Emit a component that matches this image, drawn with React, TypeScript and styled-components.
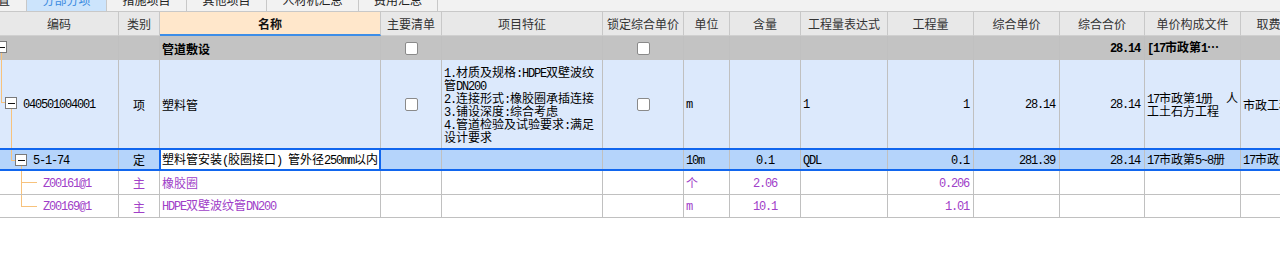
import React from "react";
import styled, { createGlobalStyle, css } from "styled-components";

const COLS = [119, 41, 221, 61, 161, 81, 46, 71, 87, 86, 86, 85, 96, 80];
const TEMPLATE = COLS.map((w) => `${w}px`).join(" ");

const GRID = "#c0c0c0";
const BLUE = "#1166ee";
const PURPLE = "#a040c8";
const TREE = "#f7c27c";

const HEADERS = [
  "编码",
  "类别",
  "名称",
  "主要清单",
  "项目特征",
  "锁定综合单价",
  "单位",
  "含量",
  "工程量表达式",
  "工程量",
  "综合单价",
  "综合合价",
  "单价构成文件",
  "取费专业",
];

const TABS = [
  { label: "费用设置", width: 81 },
  { label: "分部分项", width: 80, active: true },
  { label: "措施项目", width: 80 },
  { label: "其他项目", width: 80 },
  { label: "人材机汇总", width: 92 },
  { label: "费用汇总", width: 79 },
];

const FEATURES = [
  "1.材质及规格:HDPE双壁波纹",
  "管DN200",
  "2.连接形式:橡胶圈承插连接",
  "3.铺设深度:综合考虑",
  "4.管道检验及试验要求:满足",
  "设计要求",
];

// half-width runs use a mono face so digits get the 6px cell of the original grid font
const T = ({ children }: { children: string }) => (
  <span>
    {children
      .split(/([\x20-\x7e]+)/)
      .filter(Boolean)
      .map((part, i) =>
        /^[\x20-\x7e]+$/.test(part) ? (
          <Latin key={i}>{part}</Latin>
        ) : (
          <React.Fragment key={i}>{part}</React.Fragment>
        )
      )}
  </span>
);

type GuideKind = "group" | "bill" | "quota" | "item" | "lastItem";

const GUIDES: Record<GuideKind, { w: number; h: number; lines: string; box?: [number, number] }> = {
  group: { w: 10, h: 24, lines: "M1.5 17V24", box: [-4.5, 5.5] },
  bill: { w: 23, h: 88, lines: "M1.5 0V42.5H5 M11.5 49V88", box: [5.5, 37.5] },
  quota: { w: 33, h: 19, lines: "M11.5 0V10.5H15 M21.5 16V19", box: [15.5, 4.5] },
  item: { w: 43, h: 23, lines: "M21.5 0V23 M21.5 11.5H37" },
  lastItem: { w: 43, h: 22, lines: "M21.5 0V11.5H37" },
};

const TreeGuide = ({ kind }: { kind: GuideKind }) => {
  const g = GUIDES[kind];
  return (
    <Guide width={g.w} height={g.h} viewBox={`0 0 ${g.w} ${g.h}`} shapeRendering="crispEdges">
      <path d={g.lines} stroke={TREE} fill="none" />
      {g.box && (
        <>
          <rect x={g.box[0]} y={g.box[1]} width={11} height={11} fill="#fff" stroke="#7a7a7a" />
          <path d={`M${g.box[0] + 2.5} ${g.box[1] + 6}H${g.box[0] + 9.5}`} stroke="#111" />
        </>
      )}
    </Guide>
  );
};

export default function App() {
  return (
    <Page>
      <GlobalStyle />
      <TabBar>
        {TABS.map((t) => (
          <Tab key={t.label} $w={t.width} $active={t.active}>
            {t.label}
          </Tab>
        ))}
      </TabBar>

      <HeaderRow>
        {HEADERS.map((h) => (
          <HeadCell key={h} $main={h === "名称"}>
            {h}
          </HeadCell>
        ))}
      </HeaderRow>

      <Row $kind="group">
        <CodeCell>
          <TreeGuide kind="group" />
        </CodeCell>
        <Cell />
        <Cell $bold>管道敷设</Cell>
        <Cell $align="center">
          <Checkbox />
        </Cell>
        <Cell />
        <Cell $align="center">
          <Checkbox />
        </Cell>
        <Cell />
        <Cell />
        <Cell />
        <Cell />
        <Cell />
        <Cell $align="right" $bold>
          <T>28.14</T>
        </Cell>
        <Cell $bold>
          <T>[17市政第1…</T>
        </Cell>
        <Cell />
      </Row>

      <Row $kind="bill">
        <CodeCell>
          <TreeGuide kind="bill" />
          <T>040501004001</T>
        </CodeCell>
        <Cell $align="center">项</Cell>
        <Cell>塑料管</Cell>
        <Cell $align="center">
          <Checkbox />
        </Cell>
        <Cell>
          <Lines>
            {FEATURES.map((f) => (
              <Line key={f}>
                <T>{f}</T>
              </Line>
            ))}
          </Lines>
        </Cell>
        <Cell $align="center">
          <Checkbox />
        </Cell>
        <Cell>
          <T>m</T>
        </Cell>
        <Cell />
        <Cell>
          <T>1</T>
        </Cell>
        <Cell $align="right">
          <T>1</T>
        </Cell>
        <Cell $align="right">
          <T>28.14</T>
        </Cell>
        <Cell $align="right">
          <T>28.14</T>
        </Cell>
        <Cell $tight>
          <Lines $full>
            <SplitLine>
              <T>17市政第1册</T>
              <span>人</span>
            </SplitLine>
            <Line>工土石方工程</Line>
          </Lines>
        </Cell>
        <Cell>市政工程</Cell>
      </Row>

      <Row $kind="quota">
        <CodeCell>
          <TreeGuide kind="quota" />
          <T>5-1-74</T>
        </CodeCell>
        <Cell $align="center">定</Cell>
        <EditCell>
          <T>塑料管安装(胶圈接口) 管外径250mm以内</T>
        </EditCell>
        <Cell />
        <Cell />
        <Cell />
        <Cell>
          <T>10m</T>
        </Cell>
        <Cell $align="center">
          <T>0.1</T>
        </Cell>
        <Cell>
          <T>QDL</T>
        </Cell>
        <Cell $align="right">
          <T>0.1</T>
        </Cell>
        <Cell $align="right">
          <T>281.39</T>
        </Cell>
        <Cell $align="right">
          <T>28.14</T>
        </Cell>
        <Cell>
          <T>17市政第5~8册</T>
        </Cell>
        <Cell>
          <T>17市政第5~8册</T>
        </Cell>
      </Row>

      <Row $kind="item" $purple>
        <CodeCell>
          <TreeGuide kind="item" />
          <T>Z00161@1</T>
        </CodeCell>
        <Cell $align="center">主</Cell>
        <Cell>橡胶圈</Cell>
        <Cell />
        <Cell />
        <Cell />
        <Cell>个</Cell>
        <Cell $align="center">
          <T>2.06</T>
        </Cell>
        <Cell />
        <Cell $align="right">
          <T>0.206</T>
        </Cell>
        <Cell />
        <Cell />
        <Cell />
        <Cell />
      </Row>

      <Row $kind="lastItem" $purple>
        <CodeCell>
          <TreeGuide kind="lastItem" />
          <T>Z00169@1</T>
        </CodeCell>
        <Cell $align="center">主</Cell>
        <Cell>
          <T>HDPE双壁波纹管DN200</T>
        </Cell>
        <Cell />
        <Cell />
        <Cell />
        <Cell>
          <T>m</T>
        </Cell>
        <Cell $align="center">
          <T>10.1</T>
        </Cell>
        <Cell />
        <Cell $align="right">
          <T>1.01</T>
        </Cell>
        <Cell />
        <Cell />
        <Cell />
        <Cell />
      </Row>
    </Page>
  );
}

const GlobalStyle = createGlobalStyle`
  html, body {
    margin: 0;
    padding: 0;
    background: #ffffff;
  }
`;

const Page = styled.div`
  width: 1280px;
  height: 268px;
  overflow: hidden;
  background: #ffffff;
  font-family: "Noto Sans CJK SC", "Liberation Sans", sans-serif;
  font-size: 12px;
  color: #000;
`;

const Latin = styled.span`
  font-family: "Liberation Mono", "DejaVu Sans Mono", monospace;
  font-size: 12px;
  letter-spacing: -1.2px;
`;

const TabBar = styled.div`
  display: flex;
  height: 12px;
  box-sizing: border-box;
  background: #f2f2f2;
  border-bottom: 1px solid #c8c8c8;
  overflow: hidden;
`;

const Tab = styled.div<{ $w: number; $active?: boolean }>`
  flex: none;
  width: ${(p) => p.$w}px;
  height: 24px;
  margin-top: -13px;
  box-sizing: border-box;
  border-right: 1px solid #c8c8c8;
  display: flex;
  align-items: center;
  justify-content: center;
  font-size: 12px;
  color: ${(p) => (p.$active ? "#3a8ae0" : "#222")};
  background: ${(p) => (p.$active ? "#cce4fc" : "#f2f2f2")};

  &:first-child {
    margin-left: -54px;
  }
`;

const HeaderRow = styled.div`
  display: grid;
  grid-template-columns: ${TEMPLATE};
  height: 24px;
  background: #e8e8e8;
`;

const HeadCell = styled.div<{ $main?: boolean }>`
  box-sizing: border-box;
  display: flex;
  align-items: center;
  justify-content: center;
  white-space: nowrap;
  overflow: hidden;
  border-right: 1px solid #c8c8c8;
  border-bottom: ${(p) => (p.$main ? "2px solid #3d8ee8" : "1px solid #d0d0d0")};
  background: ${(p) => (p.$main ? "#ffe7cb" : "transparent")};
  color: ${(p) => (p.$main ? "#111" : "#333")};
  font-weight: ${(p) => (p.$main ? 700 : 400)};
`;

const rowKinds = {
  group: css`
    height: 24px;
    background: #c3c3c3;
  `,
  bill: css`
    height: 88px;
    background: #dce9fc;
  `,
  quota: css`
    height: 23px;
    background: #b5d4fb;
    border-top: 2px solid ${BLUE};
    border-bottom: 2px solid ${BLUE};
  `,
  item: css`
    height: 24px;
    background: #ffffff;
    border-bottom: 1px solid ${GRID};
  `,
  lastItem: css`
    height: 23px;
    background: #ffffff;
    border-bottom: 1px solid ${GRID};
  `,
};

const Row = styled.div<{ $kind: GuideKind; $purple?: boolean }>`
  display: grid;
  grid-template-columns: ${TEMPLATE};
  box-sizing: border-box;
  color: ${(p) => (p.$purple ? PURPLE : "#000")};
  ${(p) => rowKinds[p.$kind]}
`;

const Cell = styled.div<{ $align?: "left" | "center" | "right"; $bold?: boolean; $tight?: boolean }>`
  box-sizing: border-box;
  min-width: 0;
  display: flex;
  align-items: center;
  justify-content: ${(p) =>
    p.$align === "center" ? "center" : p.$align === "right" ? "flex-end" : "flex-start"};
  padding: ${(p) => (p.$align === "center" ? "0 1px" : p.$tight ? "0 2px" : "0 4px 0 2px")};
  border-right: 1px solid ${GRID};
  overflow: hidden;
  white-space: nowrap;
  line-height: 13px;
  font-weight: ${(p) => (p.$bold ? 700 : 400)};
`;

const CodeCell = styled(Cell)`
  padding: 0;
  align-items: flex-start;

  & > span {
    align-self: center;
  }
`;

const EditCell = styled(Cell)`
  background: #ffffff;
  border-right: 2px solid ${BLUE};
  box-shadow: -1px 0 0 ${BLUE}, inset 1px 0 0 ${BLUE};
`;

const Guide = styled.svg`
  flex: none;
  display: block;
  overflow: hidden;
`;

const Checkbox = styled.span`
  display: block;
  width: 13px;
  height: 13px;
  box-sizing: border-box;
  border: 1px solid #8a8a8a;
  border-radius: 2px;
  background: #ffffff;
`;

const Lines = styled.div<{ $full?: boolean }>`
  display: flex;
  flex-direction: column;
  width: ${(p) => (p.$full ? "100%" : "auto")};
`;

const Line = styled.div`
  height: 13px;
  line-height: 13px;
  white-space: nowrap;
`;

const SplitLine = styled(Line)`
  display: flex;
  justify-content: space-between;
`;
